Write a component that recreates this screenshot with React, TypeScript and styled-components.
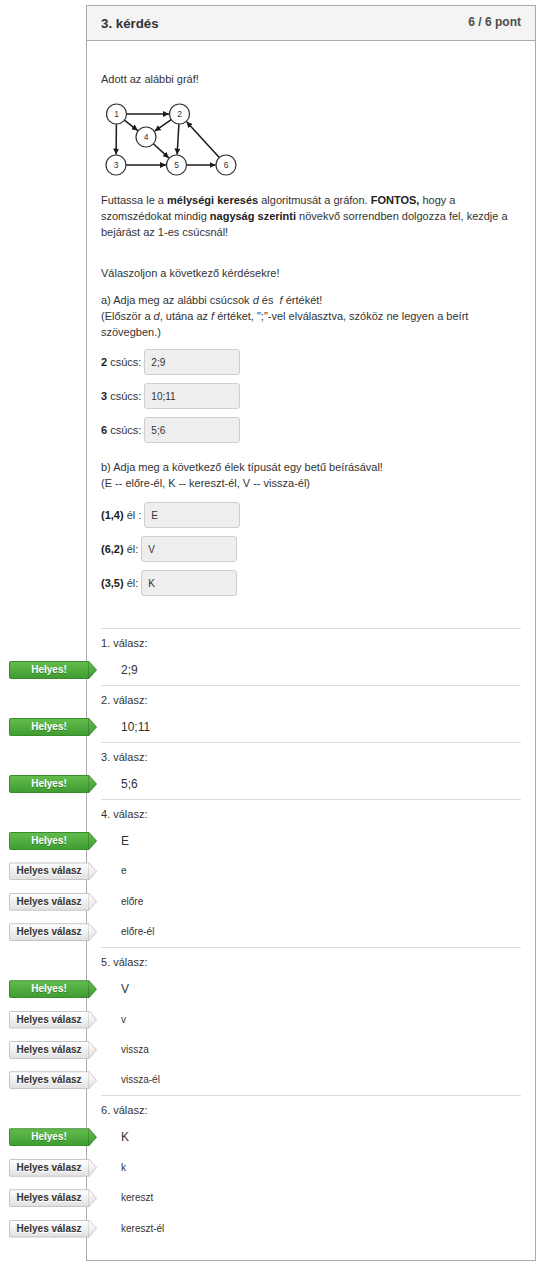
import React from "react";
import styled, { createGlobalStyle } from "styled-components";

const GlobalStyle = createGlobalStyle`
  html, body { margin: 0; padding: 0; background: #fff; }
  body { font-family: "Liberation Sans", Arial, sans-serif; color: #333; }
  * { box-sizing: border-box; }
`;

const Page = styled.div`
  padding: 5px 0 8px 86px;
`;

const Panel = styled.section`
  width: 450px;
  border: 1px solid #aaa;
  background: #fff;
`;

const Header = styled.header`
  display: flex;
  justify-content: space-between;
  align-items: flex-start;
  height: 35px;
  padding: 0 14px;
  background: #f4f4f4;
  border-bottom: 1px solid #aaa;
`;

const Title = styled.h2`
  margin: 10px 0 0;
  font-size: 13.3px;
  line-height: 16px;
  font-weight: bold;
  color: #333;
`;

const Points = styled.div`
  margin-top: 8px;
  font-size: 12px;
  line-height: 16px;
  font-weight: bold;
  color: #4d4d4d;
`;

const Body = styled.div`
  padding: 30px 14px 16px;
  font-size: 11px;
  line-height: 16px;
`;

const Text = styled.p<{ $mt?: number }>`
  margin: ${(p) => p.$mt ?? 0}px 0 0;
  font-size: 11px;
  line-height: 16px;
  color: #333;
  b { color: #222; }
`;

const GraphSvg = styled.svg`
  display: block;
  margin-top: 13px;
`;

const FieldList = styled.div<{ $mt: number }>`
  display: flex;
  flex-direction: column;
  gap: 8px;
  margin-top: ${(p) => p.$mt}px;
`;

const Field = styled.div`
  display: flex;
  align-items: baseline;
  gap: 3px;
`;

const FieldLabel = styled.span`
  font-size: 11px;
  color: #333;
  b { color: #222; }
`;

const InputBox = styled.div`
  width: 96px;
  height: 26px;
  padding: 5px 6px 3px;
  border: 1px solid #cfcfcf;
  border-radius: 3px;
  background: #eee;
  font-size: 10px;
  line-height: 16px;
  color: #333;
`;

const Answers = styled.div`
  margin-top: 32px;
`;

const AnswerBlock = styled.div`
  border-top: 1px solid #ddd;
  padding: 6px 0 6px;
`;

const AnswerLabel = styled.div`
  font-size: 11px;
  line-height: 16px;
  color: #333;
  margin-bottom: 10px;
`;

const AnswerRows = styled.div`
  display: flex;
  flex-direction: column;
  gap: 12.4px;
`;

const AnswerRow = styled.div`
  position: relative;
  display: flex;
  align-items: center;
  height: 18px;
  padding-left: 20px;
`;

const AnswerText = styled.span<{ $main?: boolean }>`
  font-size: ${(p) => (p.$main ? 12 : 10)}px;
  color: #333;
`;

const Badge = styled.span<{ $variant: "correct" | "solution" }>`
  position: absolute;
  left: -92px;
  top: 0;
  width: 88px;
  height: 18px;
  clip-path: polygon(0 0, 80px 0, 88px 50%, 80px 100%, 0 100%);
  background: ${(p) => (p.$variant === "correct" ? "#3a8a2e" : "#c6c6c6")};
  border-radius: 2px 0 0 2px;
`;

const BadgeFill = styled.span<{ $variant: "correct" | "solution" }>`
  position: absolute;
  inset: 1px;
  display: flex;
  align-items: center;
  justify-content: center;
  padding-right: 8px;
  clip-path: polygon(0 0, 79px 0, 86px 50%, 79px 100%, 0 100%);
  border-radius: 1px 0 0 1px;
  background: ${(p) =>
    p.$variant === "correct"
      ? "linear-gradient(#63bc4c, #3f9d33)"
      : "linear-gradient(#ffffff, #e1e1e1)"};
  color: ${(p) => (p.$variant === "correct" ? "#fff" : "#333")};
  font-size: 10px;
  font-weight: bold;
  text-shadow: ${(p) =>
    p.$variant === "correct" ? "0 1px 0 rgba(0,0,0,0.25)" : "0 1px 0 #fff"};
  &::after {
    content: "";
    position: absolute;
    left: 78px;
    top: 0;
    bottom: 0;
    width: 1px;
    background: ${(p) =>
      p.$variant === "correct" ? "rgba(0,0,0,0.18)" : "rgba(0,0,0,0.1)"};
  }
`;

type NodeId = "1" | "2" | "3" | "4" | "5" | "6";
const nodes: Record<NodeId, [number, number]> = {
  "1": [15.5, 14],
  "2": [78.5, 14],
  "4": [45, 37],
  "3": [15, 65],
  "5": [75.5, 65],
  "6": [125, 65],
};
const R = 10;
const edges: [NodeId, NodeId][] = [
  ["1", "2"],
  ["1", "4"],
  ["1", "3"],
  ["2", "4"],
  ["2", "5"],
  ["4", "5"],
  ["3", "5"],
  ["5", "6"],
  ["6", "2"],
];

const Graph: React.FC = () => (
  <GraphSvg width={150} height={80} viewBox="0 0 150 80">
    <defs>
      <marker
        id="arr"
        markerWidth={6}
        markerHeight={6}
        refX={6}
        refY={3}
        orient="auto"
        markerUnits="userSpaceOnUse"
      >
        <path d="M0,0 L6,3 L0,6 z" fill="#1a1a1a" />
      </marker>
    </defs>
    {edges.map(([a, b]) => {
      const [ax, ay] = nodes[a];
      const [bx, by] = nodes[b];
      const dx = bx - ax;
      const dy = by - ay;
      const len = Math.hypot(dx, dy);
      const ux = dx / len;
      const uy = dy / len;
      return (
        <line
          key={a + b}
          x1={ax + ux * R}
          y1={ay + uy * R}
          x2={bx - ux * (R + 0.5)}
          y2={by - uy * (R + 0.5)}
          stroke="#1a1a1a"
          strokeWidth={1.5}
          markerEnd="url(#arr)"
        />
      );
    })}
    {(Object.keys(nodes) as NodeId[]).map((id) => (
      <g key={id}>
        <circle cx={nodes[id][0]} cy={nodes[id][1]} r={R} fill="#fff" stroke="#333" strokeWidth={1.2} />
        <text
          x={nodes[id][0]}
          y={nodes[id][1] + 3}
          fontSize={8.5}
          fontFamily='"Liberation Sans", Arial, sans-serif'
          textAnchor="middle"
          fill="#333"
        >
          {id}
        </text>
      </g>
    ))}
  </GraphSvg>
);

type Answer = { main: string; alts: string[] };
const answers: Answer[] = [
  { main: "2;9", alts: [] },
  { main: "10;11", alts: [] },
  { main: "5;6", alts: [] },
  { main: "E", alts: ["e", "előre", "előre-él"] },
  { main: "V", alts: ["v", "vissza", "vissza-él"] },
  { main: "K", alts: ["k", "kereszt", "kereszt-él"] },
];

const BadgeTag: React.FC<{ variant: "correct" | "solution"; children: React.ReactNode }> = ({
  variant,
  children,
}) => (
  <Badge $variant={variant}>
    <BadgeFill $variant={variant}>{children}</BadgeFill>
  </Badge>
);

export default function App() {
  return (
    <>
      <GlobalStyle />
      <Page>
        <Panel>
          <Header>
            <Title>3. kérdés</Title>
            <Points>6 / 6 pont</Points>
          </Header>
          <Body>
            <Text>Adott az alábbi gráf!</Text>
            <Graph />
            <Text $mt={12}>
              Futtassa le a <b>mélységi keresés</b> algoritmusát a gráfon. <b>FONTOS,</b> hogy a
              szomszédokat mindig <b>nagyság szerinti</b> növekvő sorrendben dolgozza fel, kezdje a
              bejárást az 1-es csúcsnál!
            </Text>
            <Text $mt={25}>Válaszoljon a következő kérdésekre!</Text>
            <Text $mt={11}>
              a) Adja meg az alábbi csúcsok <i>d</i> és&nbsp; <i>f</i> értékét!
              <br />
              (Először a <i>d</i>, utána az <i>f</i> értéket, ";"-vel elválasztva, szóköz ne legyen a
              beírt szövegben.)
            </Text>
            <FieldList $mt={9}>
              <Field>
                <FieldLabel>
                  <b>2</b> csúcs:
                </FieldLabel>
                <InputBox>2;9</InputBox>
              </Field>
              <Field>
                <FieldLabel>
                  <b>3</b> csúcs:
                </FieldLabel>
                <InputBox>10;11</InputBox>
              </Field>
              <Field>
                <FieldLabel>
                  <b>6</b> csúcs:
                </FieldLabel>
                <InputBox>5;6</InputBox>
              </Field>
            </FieldList>
            <Text $mt={16}>
              b) Adja meg a következő élek típusát egy betű beírásával!
              <br />
              (E -- előre-él, K -- kereszt-él, V -- vissza-él)
            </Text>
            <FieldList $mt={11}>
              <Field>
                <FieldLabel>
                  <b>(1,4)</b> él :
                </FieldLabel>
                <InputBox>E</InputBox>
              </Field>
              <Field>
                <FieldLabel>
                  <b>(6,2)</b> él:
                </FieldLabel>
                <InputBox>V</InputBox>
              </Field>
              <Field>
                <FieldLabel>
                  <b>(3,5)</b> él:
                </FieldLabel>
                <InputBox>K</InputBox>
              </Field>
            </FieldList>
            <Answers>
              {answers.map((a, i) => (
                <AnswerBlock key={i}>
                  <AnswerLabel>{i + 1}. válasz:</AnswerLabel>
                  <AnswerRows>
                    <AnswerRow>
                      <BadgeTag variant="correct">Helyes!</BadgeTag>
                      <AnswerText $main>{a.main}</AnswerText>
                    </AnswerRow>
                    {a.alts.map((alt) => (
                      <AnswerRow key={alt}>
                        <BadgeTag variant="solution">Helyes válasz</BadgeTag>
                        <AnswerText>{alt}</AnswerText>
                      </AnswerRow>
                    ))}
                  </AnswerRows>
                </AnswerBlock>
              ))}
            </Answers>
          </Body>
        </Panel>
      </Page>
    </>
  );
}
